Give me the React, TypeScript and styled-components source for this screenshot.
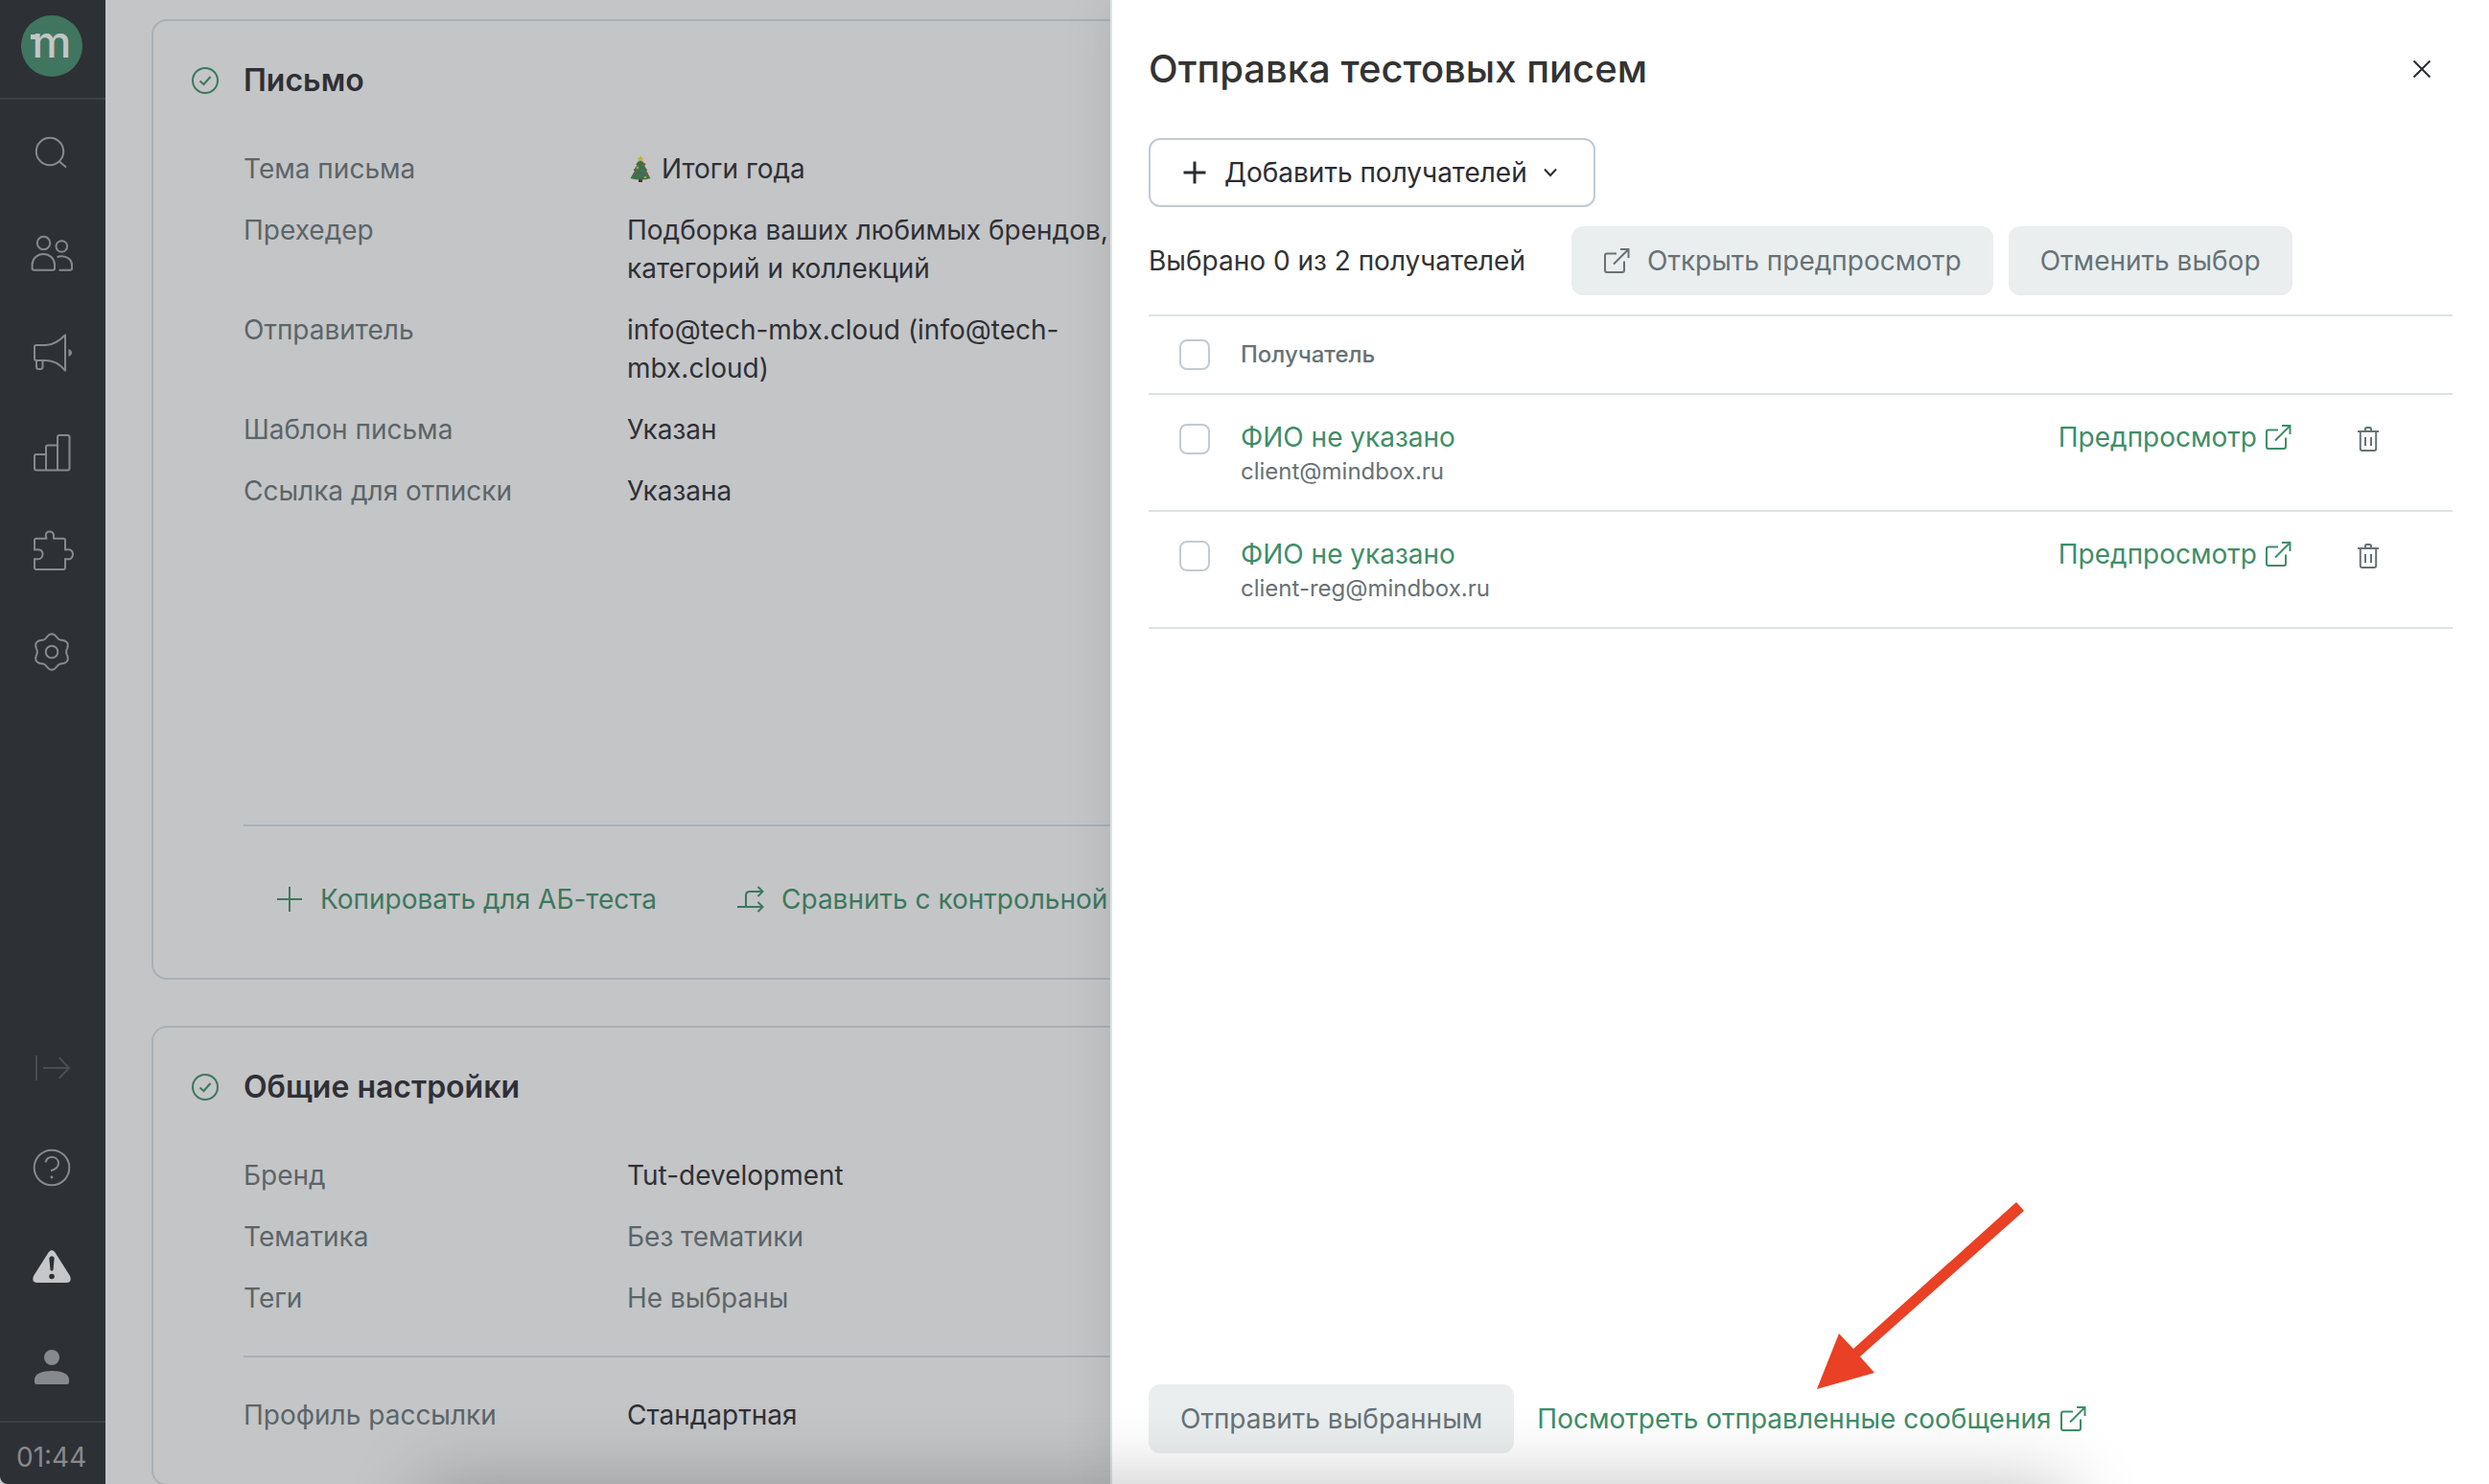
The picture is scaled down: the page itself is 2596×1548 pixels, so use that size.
import React from 'react';
import styled, { createGlobalStyle } from 'styled-components';

const color = {
  sidebar: '#2d3034',
  sidebarLine: '#3c4044',
  sidebarIcon: '#88898d',
  page: '#c4c5c7',
  pageLine: '#a8b0b6',
  pageText: '#2f3036',
  pageMuted: '#5b6569',
  pageGreen: '#3c785c',
  line: '#dce3e6',
  control: '#c0cbd3',
  disabled: '#eaeeef',
  text: '#333333',
  ink: '#2b2c33',
  muted: '#667276',
  green: '#3f8d68',
};

const GlobalStyle = createGlobalStyle`
  *, *::before, *::after { box-sizing: border-box; }
  html, body, #root { height: 100%; }
  body {
    margin: 0;
    overflow: hidden;
    background: ${color.page};
    font-family: Inter, "Liberation Sans", sans-serif;
    font-size: 28px;
    line-height: 40px;
  }
  button { font: inherit; border: 0; padding: 0; background: none; cursor: pointer; }
  a { text-decoration: none; color: inherit; }
  h1, h2, p, dl, dd { margin: 0; }
  svg { display: block; flex: none; }
`;

/* ---------- icons ---------- */

type IconProps = { size?: number; children: React.ReactNode; width?: number };

const Icon = ({ size = 28, width = 2, children }: IconProps) => (
  <svg
    width={size}
    height={size}
    viewBox={`0 0 ${size} ${size}`}
    fill="none"
    stroke="currentColor"
    strokeWidth={width}
    aria-hidden="true"
  >
    {children}
  </svg>
);

const gearPath =
  Array.from({ length: 120 }, (_, i) => {
    const a = (i / 120) * Math.PI * 2;
    const r = 16.9 + 1.8 * Math.cos(6 * a);
    return `${i ? 'L' : 'M'}${(24 + r * Math.sin(a)).toFixed(2)} ${(24 - r * Math.cos(a)).toFixed(2)}`;
  }).join('') + 'Z';

const SearchIcon = () => (
  <Icon size={48}><circle cx="22" cy="22" r="14.2" /><path d="M32 32.5L39 38.5" /></Icon>
);
const UsersIcon = () => (
  <Icon size={48}>
    <circle cx="15.5" cy="13.5" r="6.7" />
    <circle cx="34.3" cy="17" r="5.8" />
    <path d="M5.5 41.7H25.2Q27 41.7 27 40V36A11.7 11 0 0 0 3.6 36V40Q3.6 41.7 5.5 41.7Z" />
    <path d="M29.5 28.4Q31.5 27.3 34 27.3C40 27.3 45 31 45 36.5V40Q45 41.7 43 41.7H31.5" />
  </Icon>
);
const MegaphoneIcon = () => (
  <Icon size={48}>
    <path d="M6 18Q6 16 8 16H18C26 16 33 10.5 38 5.5V42.5C33 36.5 26 32 18 32H8Q6 32 6 30Z" strokeLinejoin="round" />
    <path d="M8 32V38.5Q8 41 10.5 41H12Q14.5 41 14.5 38.5V32" />
    <path d="M41.5 20L43.5 21Q46.5 24 43.5 27L41.5 28Z" fill="currentColor" stroke="none" />
  </Icon>
);
const BarsIcon = () => (
  <Icon size={48}>
    <path d="M18 26H8Q6 26 6 28V40.5Q6 42.5 8 42.5H40.5Q42.5 42.5 42.5 40.5V8Q42.5 6 40.5 6H32Q30 6 30 8V42.5M18 42.5V18.5Q18 16.5 20 16.5H30" />
  </Icon>
);
const PuzzleIcon = () => (
  <Icon size={48}>
    <path d="M18.5 9.8H8Q6 9.8 6 11.8V21.5Q14.5 20 14.5 26.2T6 31V40Q6 42 8 42H36Q38 42 38 40V31Q46 32.5 46 26.2T38 21.5V11.8Q38 9.8 36 9.8H26V7Q26 2.5 21.8 2.5T17.8 7Z" strokeLinejoin="round" />
  </Icon>
);
const GearIcon = () => (
  <Icon size={48}><path d={gearPath} /><circle cx="24" cy="24" r="6.3" /></Icon>
);
const ExpandIcon = () => (
  <Icon size={48}><path d="M8 11V37M15 24H42M31.5 13L42 24L31.5 35" /></Icon>
);
const HelpIcon = () => (
  <Icon size={48}>
    <circle cx="24" cy="24" r="18.3" />
    <path d="M17.5 18.5C18.3 15 20.8 13 24 13C28.2 13 31 15.8 31 19.5C31 24 27 26 23 27.2" />
    <circle cx="24" cy="34" r="1.4" fill="currentColor" stroke="none" />
  </Icon>
);
const WarningIcon = () => (
  <Icon size={48}>
    <path d="M20.5 8.5Q24 3.5 27.5 8.5L43 33Q45.5 40 39.5 40H8.5Q2.5 40 5 33Z" fill="currentColor" stroke="none" />
    <path d="M21.3 14Q24 10.5 26.7 14L25.5 26.5Q24 29 22.5 26.5Z" fill={color.sidebar} stroke="none" />
    <circle cx="24" cy="33.5" r="2.8" fill={color.sidebar} stroke="none" />
  </Icon>
);
const PersonIcon = () => (
  <Icon size={48}>
    <circle cx="24" cy="14" r="8" fill="currentColor" stroke="none" />
    <path d="M6 37C6 31 14 28 24 28S42 31 42 37V39.5Q42 42 40 42H8Q6 42 6 39.5Z" fill="currentColor" stroke="none" />
  </Icon>
);
const CheckIcon = () => (
  <Icon><circle cx="14" cy="14" r="13" /><path d="M8.5 14.5L12.5 18L19.5 10" /></Icon>
);
const ThinPlusIcon = () => <Icon><path d="M14 1V27M1 14H27" /></Icon>;
const PlusIcon = () => <Icon width={3}><path d="M14 2.5V25.5M2.5 14H25.5" /></Icon>;
const BranchIcon = () => (
  <Icon><path d="M0 22H26M21.5 17L26.5 22L21.5 27M9 22V10Q9 6 13 6H26M21.5 1L26.5 6L21.5 11" /></Icon>
);
const ChevronIcon = () => (
  <svg width="14" height="10" viewBox="0 0 14 10" fill="none" stroke="currentColor" strokeWidth="2" aria-hidden="true">
    <path d="M1 1.5L7 8L13 1.5" />
  </svg>
);
const ExternalIcon = () => (
  <Icon><path d="M14 6.5H4Q2 6.5 2 8.5V24Q2 26 4 26H20Q22 26 22 24V14.5M18 2H26.5V11M26 2.5L11 17.5" /></Icon>
);
const TrashIcon = () => (
  <Icon><path d="M3 6H25M5.8 6V24Q5.8 26 7.8 26H20.2Q22.2 26 22.2 24V6M11 6V3.5Q11 2 12.5 2H15.5Q17 2 17 3.5V6M11 12V21M17 12V21" /></Icon>
);
const CloseIcon = () => <Icon><path d="M5.5 5.5L22.5 22.5M22.5 5.5L5.5 22.5" /></Icon>;

const TreeIcon = () => (
  <svg width="28" height="28" viewBox="-2 0 28 28" aria-hidden="true">
    <rect x="10" y="23" width="4" height="5" fill="#4b3427" />
    <path d="M12 3L17 10L15.5 10L19.5 16L18 16L22.5 24Q12 27 1.5 24L6 16L4.5 16L8.5 10L7 10Z" fill="#3d7047" />
    <path d="M12 0L13.2 2.5L16 3L13.7 4.5L14.2 7L12 5.5L9.8 7L10.3 4.5L8 3L10.8 2.5Z" fill="#c9b234" />
    <circle cx="16" cy="9.5" r="1.4" fill="#a8454e" />
    <circle cx="9" cy="13" r="1.4" fill="#b59a3a" />
    <circle cx="14" cy="16" r="1.3" fill="#4a68a5" />
    <circle cx="18.5" cy="19" r="1.4" fill="#a8454e" />
    <circle cx="6.5" cy="19" r="1.3" fill="#a8454e" />
    <circle cx="11.5" cy="21.5" r="1.3" fill="#4a68a5" />
    <circle cx="17" cy="23" r="1.3" fill="#b59a3a" />
  </svg>
);

/* ---------- shell and sidebar ---------- */

const Shell = styled.div`
  position: relative;
  display: flex;
  height: 100%;
  overflow: hidden;
`;

const Sidebar = styled.aside`
  display: flex;
  flex-direction: column;
  flex: none;
  width: 110px;
  background: ${color.sidebar};
  color: ${color.sidebarIcon};
  border-bottom-left-radius: 8px;
`;

const LogoBar = styled.div`
  height: 104px;
  padding: 16px 22px;
  border-bottom: 2px solid ${color.sidebarLine};
`;

const Logo = styled.a`
  position: relative;
  display: block;
  width: 64px;
  height: 64px;
  border-radius: 50%;
  background: #407660;
  color: ${color.page};
  font-size: 46px;
  font-weight: 500;
  line-height: 54px;
  text-align: center;

  &::before {
    content: '';
    position: absolute;
    left: 10px;
    top: 20px;
    width: 6px;
    height: 5px;
    background: ${color.page};
  }
`;

const NavGroup = styled.nav<{ $bottom?: boolean }>`
  display: flex;
  flex-direction: column;
  padding: 4px 0;
  margin-top: ${(p) => (p.$bottom ? 'auto' : '0')};
`;

const NavButton = styled.button<{ $tone?: string }>`
  display: flex;
  align-items: center;
  height: 104px;
  padding-left: 30px;
  color: ${(p) => p.$tone ?? color.sidebarIcon};
`;

const Clock = styled.div`
  height: 66px;
  padding: 16px 0 0 17px;
  border-top: 2px solid ${color.sidebarLine};
`;

/* ---------- page behind the drawer ---------- */

const Page = styled.main`
  flex: 1;
  min-width: 0;
  display: flex;
  flex-direction: column;
  gap: 48px;
  padding: 20px 48px 0;
  background: ${color.page};
  color: ${color.pageText};
`;

const Card = styled.section`
  flex: none;
  padding: 42px 40px 0;
  border: 2px solid ${color.pageLine};
  border-radius: 16px;
`;

const CardHead = styled.header`
  display: flex;
  align-items: center;
  gap: 26px;
  color: ${color.pageGreen};
`;

const CardTitle = styled.h2`
  font-size: 32px;
  font-weight: 600;
  color: ${color.pageText};
`;

const Fields = styled.dl<{ $first?: boolean; $tall?: boolean }>`
  display: grid;
  grid-template-columns: 400px minmax(0, 520px);
  align-content: start;
  row-gap: 24px;
  margin-left: 54px;
  margin-top: ${(p) => (p.$first ? '52px' : '40px')};
  padding-bottom: ${(p) => (p.$first ? '40px' : '52px')};
  min-height: ${(p) => (p.$tall ? '704px' : '0')};
`;

const Label = styled.dt`
  color: ${color.pageMuted};
`;

const Value = styled.dd<{ $muted?: boolean }>`
  color: ${(p) => (p.$muted ? color.pageMuted : color.pageText)};
`;

const WithIcon = styled.span`
  display: flex;
  align-items: center;
  gap: 8px;
`;

const Divider = styled.hr`
  height: 2px;
  margin: 0 0 0 54px;
  border: 0;
  background: ${color.pageLine};
`;

const CardActions = styled.div`
  display: flex;
  gap: 18px;
  margin-left: 54px;
  padding: 40px 0 46px;
`;

const GhostButton = styled.button`
  display: flex;
  align-items: center;
  gap: 18px;
  height: 72px;
  padding: 0 32px 0 34px;
  color: ${color.pageGreen};
  white-space: nowrap;
`;

/* ---------- drawer ---------- */

const Drawer = styled.section`
  position: absolute;
  top: 0;
  right: 0;
  bottom: 0;
  display: flex;
  flex-direction: column;
  width: 1438px;
  max-width: 100%;
  padding: 36px 38px 32px;
  background: #fff;
  border-left: 2px solid ${color.line};
  box-shadow: 0 0 48px rgba(0, 0, 0, 0.1);
  color: ${color.text};
`;

const DrawerHead = styled.header`
  display: flex;
  align-items: center;
  justify-content: space-between;
  height: 72px;
  margin-bottom: 36px;
`;

const DrawerTitle = styled.h1`
  font-size: 40px;
  font-weight: 500;
  line-height: 48px;
`;

const IconButton = styled.button<{ $size: number }>`
  display: flex;
  align-items: center;
  justify-content: center;
  width: ${(p) => p.$size}px;
  height: ${(p) => p.$size}px;
  color: ${color.muted};
`;

const CloseButton = styled(IconButton)`
  color: ${color.ink};
`;

const Toolbar = styled.div`
  display: flex;
  align-items: center;
  gap: 16px;
  margin-bottom: 20px;
`;

const SelectedCount = styled.p`
  margin-right: 32px;
`;

const Button = styled.button`
  display: flex;
  align-items: center;
  gap: 18px;
  height: 72px;
  padding: 0 33px;
  border-radius: 12px;
  white-space: nowrap;

  &:disabled {
    background: ${color.disabled};
    color: ${color.muted};
    cursor: default;
  }
`;

const OutlineButton = styled(Button)`
  gap: 17px;
  padding: 0 38px 0 32px;
  border: 2px solid ${color.control};
  color: ${color.ink};
`;

const Table = styled.table`
  width: 100%;
  border-collapse: separate;
  border-spacing: 0;
  border-top: 2px solid ${color.line};
`;

const HeadCell = styled.th<{ $width?: number }>`
  width: ${(p) => (p.$width ? `${p.$width}px` : 'auto')};
  height: 82px;
  padding: 0;
  border-bottom: 2px solid ${color.line};
  color: ${color.muted};
  font-size: 24px;
  font-weight: 500;
  text-align: left;
`;

const Cell = styled.td`
  height: 122px;
  padding: 26px 0 0;
  border-bottom: 2px solid ${color.line};
  vertical-align: top;
`;

const Check = styled.input`
  appearance: none;
  display: block;
  width: 32px;
  height: 32px;
  margin: 0 0 0 32px;
  border: 2px solid ${color.control};
  border-radius: 8px;
  background: #fff;

  ${Cell} & {
    margin-top: 4px;
  }
`;

const NameLink = styled.a`
  display: block;
  line-height: 36px;
  color: ${color.green};
`;

const Email = styled.div`
  font-size: 24px;
  line-height: 36px;
  color: ${color.muted};
`;

const ExternalLink = styled.a`
  display: flex;
  align-items: center;
  justify-content: flex-end;
  gap: 8px;
  line-height: 36px;
  color: ${color.green};
  white-space: nowrap;
`;

const RowTools = styled.div`
  display: flex;
  padding-left: 60px;
`;

const DrawerFoot = styled.footer`
  display: flex;
  align-items: center;
  gap: 24px;
  margin-top: auto;
`;

const Pointer = styled.svg`
  position: absolute;
  right: 484px;
  bottom: 99px;
`;

const DockShade = styled.div`
  position: absolute;
  left: 440px;
  right: 440px;
  top: 100%;
  height: 200px;
  box-shadow: 0 0 80px rgba(0, 0, 0, 0.24);
  pointer-events: none;
`;

/* ---------- data ---------- */

const topNav = [
  { label: 'Поиск', icon: <SearchIcon /> },
  { label: 'Клиенты', icon: <UsersIcon /> },
  { label: 'Кампании', icon: <MegaphoneIcon /> },
  { label: 'Отчеты', icon: <BarsIcon /> },
  { label: 'Интеграции', icon: <PuzzleIcon /> },
  { label: 'Настройки', icon: <GearIcon /> },
];

const bottomNav = [
  { label: 'Развернуть', icon: <ExpandIcon />, tone: '#4a4e52' },
  { label: 'Помощь', icon: <HelpIcon /> },
  { label: 'Предупреждения', icon: <WarningIcon />, tone: '#c6c7c9' },
  { label: 'Профиль', icon: <PersonIcon /> },
];

const recipients = [
  { name: 'ФИО не указано', email: 'client@mindbox.ru' },
  { name: 'ФИО не указано', email: 'client-reg@mindbox.ru' },
];

export default function App() {
  return (
    <>
      <GlobalStyle />
      <Shell>
        <Sidebar>
          <LogoBar>
            <Logo href="#">m</Logo>
          </LogoBar>
          <NavGroup>
            {topNav.map((n) => (
              <NavButton key={n.label} aria-label={n.label}>{n.icon}</NavButton>
            ))}
          </NavGroup>
          <NavGroup $bottom>
            {bottomNav.map((n) => (
              <NavButton key={n.label} aria-label={n.label} $tone={n.tone}>{n.icon}</NavButton>
            ))}
          </NavGroup>
          <Clock>01:44</Clock>
        </Sidebar>

        <Page>
          <Card>
            <CardHead>
              <CheckIcon />
              <CardTitle>Письмо</CardTitle>
            </CardHead>
            <Fields $first $tall>
              <Label>Тема письма</Label>
              <Value><WithIcon><TreeIcon />Итоги года</WithIcon></Value>
              <Label>Прехедер</Label>
              <Value>Подборка ваших любимых брендов, категорий и коллекций</Value>
              <Label>Отправитель</Label>
              <Value>info@tech-mbx.cloud (info@tech-mbx.cloud)</Value>
              <Label>Шаблон письма</Label>
              <Value>Указан</Value>
              <Label>Ссылка для отписки</Label>
              <Value>Указана</Value>
            </Fields>
            <Divider />
            <CardActions>
              <GhostButton><ThinPlusIcon />Копировать для АБ-теста</GhostButton>
              <GhostButton><BranchIcon />Сравнить с контрольной</GhostButton>
            </CardActions>
          </Card>

          <Card>
            <CardHead>
              <CheckIcon />
              <CardTitle>Общие настройки</CardTitle>
            </CardHead>
            <Fields $first>
              <Label>Бренд</Label>
              <Value>Tut-development</Value>
              <Label>Тематика</Label>
              <Value $muted>Без тематики</Value>
              <Label>Теги</Label>
              <Value $muted>Не выбраны</Value>
            </Fields>
            <Divider />
            <Fields>
              <Label>Профиль рассылки</Label>
              <Value>Стандартная</Value>
            </Fields>
          </Card>
        </Page>

        <Drawer role="dialog" aria-labelledby="drawer-title">
          <DrawerHead>
            <DrawerTitle id="drawer-title">Отправка тестовых писем</DrawerTitle>
            <CloseButton $size={64} aria-label="Закрыть"><CloseIcon /></CloseButton>
          </DrawerHead>
          <Toolbar>
            <OutlineButton><PlusIcon />Добавить получателей<ChevronIcon /></OutlineButton>
          </Toolbar>
          <Toolbar>
            <SelectedCount>Выбрано 0 из 2 получателей</SelectedCount>
            <Button disabled><ExternalIcon />Открыть предпросмотр</Button>
            <Button disabled>Отменить выбор</Button>
          </Toolbar>
          <Table>
            <thead>
              <tr>
                <HeadCell $width={96}><Check type="checkbox" aria-label="Выбрать всех" /></HeadCell>
                <HeadCell>Получатель</HeadCell>
                <HeadCell $width={280} />
                <HeadCell $width={168} />
              </tr>
            </thead>
            <tbody>
              {recipients.map((r) => (
                <tr key={r.email}>
                  <Cell><Check type="checkbox" aria-label={r.email} /></Cell>
                  <Cell>
                    <NameLink href="#">{r.name}</NameLink>
                    <Email>{r.email}</Email>
                  </Cell>
                  <Cell><ExternalLink href="#">Предпросмотр<ExternalIcon /></ExternalLink></Cell>
                  <Cell><RowTools><IconButton $size={40} aria-label="Удалить"><TrashIcon /></IconButton></RowTools></Cell>
                </tr>
              ))}
            </tbody>
          </Table>
          <DrawerFoot>
            <Button disabled>Отправить выбранным</Button>
            <ExternalLink href="#">Посмотреть отправленные сообщения<ExternalIcon /></ExternalLink>
          </DrawerFoot>
          <Pointer width="217" height="196" viewBox="0 0 217 196" aria-hidden="true">
            <path d="M208 1L216 10L45 162L60 179L0 196L23 138L38 154Z" fill="#ea4025" />
          </Pointer>
        </Drawer>
        <DockShade />
      </Shell>
    </>
  );
}
